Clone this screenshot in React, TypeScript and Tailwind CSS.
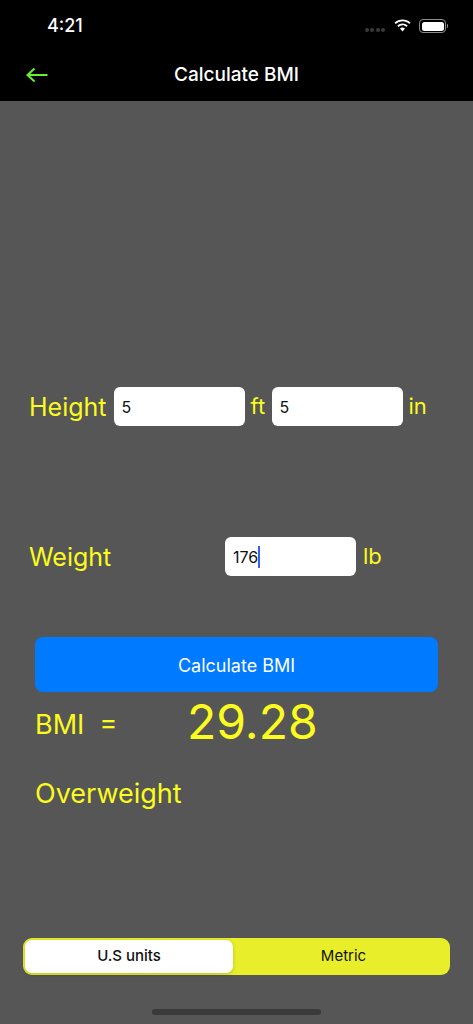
import React from "react";

function Field({ value, caret }: { value: string; caret?: boolean }) {
  return (
    <div className="flex h-[39px] w-[131px] shrink-0 items-center rounded-[6px] bg-white pl-[8px] text-[16px] text-[#111111]">
      <span>{value}</span>
      {caret && <span className="h-[22px] w-[2px] bg-[#3a5ff0]" />}
    </div>
  );
}

export default function App() {
  return (
    <div className="flex h-[1024px] w-[473px] flex-col overflow-hidden bg-[#565656] font-[Inter,sans-serif]">
      <header className="flex h-[101px] shrink-0 flex-col bg-black text-white">
        <div className="flex h-[52px] items-center justify-between pl-[47px] pr-[27px]">
          <span className="text-[18px] font-medium leading-none">4:21</span>
          <div className="flex items-center">
            <div className="mr-[8px] mt-[7px] flex gap-[1.5px]">
              <span className="h-[4px] w-[4px] rounded-full bg-[#3a3a3a]" />
              <span className="h-[4px] w-[4px] rounded-full bg-[#3a3a3a]" />
              <span className="h-[4px] w-[4px] rounded-full bg-[#3a3a3a]" />
              <span className="h-[4px] w-[4px] rounded-full bg-[#3a3a3a]" />
            </div>
            <svg width="19" height="14" viewBox="0 0 18 14" className="mr-[7px]">
              <path d="M9 2.2c2.6 0 5 1 6.8 2.7l1.2-1.3A11.700 11.700 0 0 0 9 .4 11.700 11.700 0 0 0 1 3.600l1.200 1.300A9.900 9.900 0 0 1 9 2.200z" fill="#fff" />
              <path d="M9 6.300c1.500 0 2.900.6 4 1.600l1.200-1.300A7.600 7.600 0 0 0 9 4.500a7.600 7.600 0 0 0-5.200 2.100L5 7.900a5.800 5.800 0 0 1 4-1.600z" fill="#fff" />
              <path d="M9 8.600c-1 0-1.800.4-2.500 1L9 12.600l2.500-3c-.7-.6-1.500-1-2.500-1z" fill="#fff" />
            </svg>
            <div className="relative h-[14px] w-[27px] rounded-[4px] border border-[#8a8a8a] p-[1.5px]">
              <div className="h-full w-full rounded-[2.5px] bg-white" />
              <span className="absolute right-[-3px] top-[4px] h-[4px] w-[1.5px] rounded-r-full bg-[#8a8a8a]" />
            </div>
          </div>
        </div>
        <div className="relative flex h-[49px] items-center justify-center pb-[2px]">
          <svg width="24" height="16" viewBox="0 0 24 16" fill="none" className="absolute left-[25px] top-[15px]">
            <path d="M22.500 8H2.500M9.500 1.500L2.500 8l7 6.500" stroke="#66f02e" strokeWidth="2" />
          </svg>
          <span className="text-[19px] font-medium">Calculate BMI</span>
        </div>
      </header>

      <main className="flex flex-1 flex-col text-[#fbfb1e]">
        <div className="mt-[286px] flex h-[39px] items-center pl-[29px] text-[22px]">
          <span className="mr-[7px] pt-[2px] text-[25px]">Height</span>
          <Field value="5" />
          <span className="ml-[6px] mr-[6px] w-[15px]">ft</span>
          <Field value="5" />
          <span className="ml-[6px]">in</span>
        </div>

        <div className="mt-[111px] flex h-[39px] items-center pl-[29px] text-[22px]">
          <span className="w-[196px] pt-[2px] text-[25px]">Weight</span>
          <Field value="176" caret />
          <span className="ml-[7px]">lb</span>
        </div>

        <button className="ml-[35px] mt-[61px] h-[55px] w-[403px] rounded-[8px] bg-[#007aff] pt-[2px] text-[18px] text-white">
          Calculate BMI
        </button>

        <div className="ml-[35px] mt-[3px] flex h-[54px] items-center">
          <span className="mt-[6px] w-[153px] whitespace-pre text-[27px]">BMI  =</span>
          <span className="-ml-[1px] text-[48px] leading-none">29.28</span>
        </div>

        <div className="ml-[35px] mt-[26px] text-[27px] leading-[38px]">Overweight</div>

        <div className="ml-[23px] mt-[125px] flex h-[37px] w-[427px] rounded-[9px] bg-[#e8ef2a] p-[2px] text-[15px] font-medium text-[#111111]">
          <div className="flex h-full w-[208px] items-center justify-center rounded-[7px] bg-white shadow-[0_1px_4px_rgba(0,0,0,0.2)]">
            U.S units
          </div>
          <div className="flex flex-1 items-center justify-center pl-[6px] font-normal">Metric</div>
        </div>

        <div className="ml-[152px] mt-[34px] h-[6px] w-[169px] rounded-full bg-[#3a3a3a]" />
      </main>
    </div>
  );
}
